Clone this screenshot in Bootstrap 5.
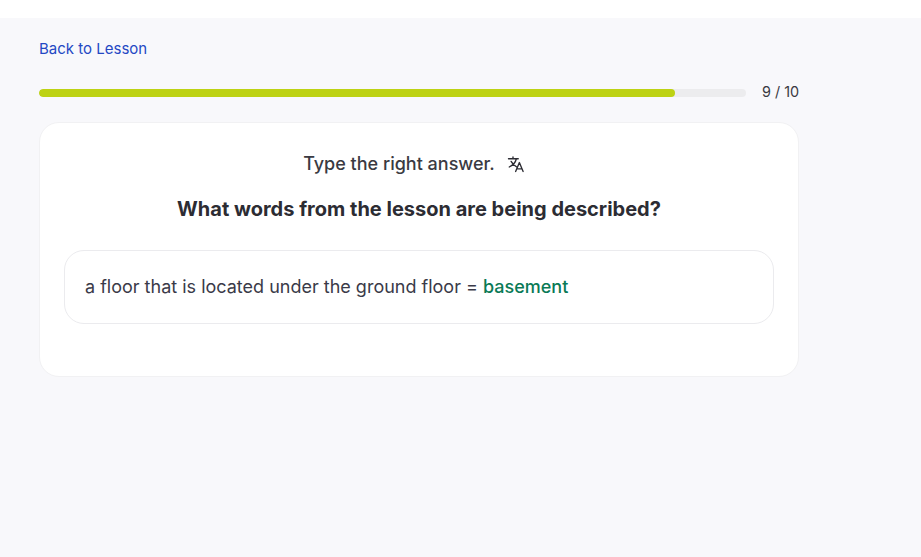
<!DOCTYPE html>
<html lang="en">
<head>
  <meta charset="UTF-8">
  <title>Exercise</title>
  <link href="https://cdn.jsdelivr.net/npm/bootstrap@5.3.0/dist/css/bootstrap.min.css" rel="stylesheet">
  <style>
    body {
      font-family: Inter, sans-serif;
      background-color: #fff;
      color: #2c2c33;
      overflow: hidden;
    }
    .page-wrap {
      margin-top: 18px;
      height: 539px;
      background-color: #f8f8fb;
      padding: 21px 122px 0 39px;
    }
    .back-link {
      font-size: 15px;
      line-height: 20px;
      color: #2448c4;
      text-decoration: none;
    }
    .progress-row {
      margin-top: 24px;
      height: 20px;
    }
    .lesson-progress {
      height: 8px;
      background-color: #ececee;
      border-radius: 4px;
    }
    .lesson-progress .progress-bar {
      background-color: #bdd213;
      border-radius: 4px;
    }
    .count-label {
      font-size: 14.4px;
      margin-left: 16px;
      margin-bottom: 2px;
      width: 37px;
      white-space: nowrap;
      color: #3a3a42;
    }
    .task-card {
      margin-top: 19px;
      height: 255px;
      background: #fff;
      border: 1px solid #f1f1f3;
      border-radius: 20px;
      padding: 28px 24px 0;
    }
    .task-hint {
      font-size: 18px;
      font-weight: 500;
      line-height: 26px;
      color: #3a3a42;
    }
    .hint-icon {
      margin-left: 4px;
      margin-right: 10px;
    }
    .task-title {
      font-size: 20px;
      font-weight: 700;
      line-height: 28px;
      margin: 18px 0 27px;
      color: #2c2c33;
    }
    .answer-box {
      height: 74px;
      border: 1px solid #ebebee;
      border-radius: 20px;
      padding: 0 20px 1px;
      font-size: 18px;
      color: #3a3a48;
    }
    .answer-word {
      color: #0a7a56;
      font-weight: 500;
    }
  </style>
</head>
<body>
  <div class="page-wrap">
    <a href="#" class="back-link d-block">Back to Lesson</a>
    <div class="progress-row d-flex align-items-center">
      <div class="progress lesson-progress flex-grow-1">
        <div class="progress-bar" style="width: 90%"></div>
      </div>
      <span class="count-label">9 / 10</span>
    </div>
    <div class="task-card">
      <div class="task-hint d-flex justify-content-center align-items-center gap-2">
        <span>Type the right answer.</span>
        <svg class="hint-icon" width="18" height="18" viewBox="0 0 24 24" fill="none" stroke="#2c2c33" stroke-width="1.8" stroke-linecap="round" stroke-linejoin="round"><path d="M2 5h13M8 2.500V5M12.500 5c-1 4.500-4.500 8.500-9.500 11M5.500 8.500c1.500 3 4 5.500 7.500 7.500"/><path d="M11.500 22l5-12 5 12M13.200 18.500h6.600"/></svg>
      </div>
      <h2 class="task-title text-center">What words from the lesson are being described?</h2>
      <div class="answer-box d-flex align-items-center">
        <span>a floor that is located under the ground floor = <span class="answer-word">basement</span></span>
      </div>
    </div>
  </div>
  <script src="https://cdn.jsdelivr.net/npm/bootstrap@5.3.0/dist/js/bootstrap.bundle.min.js"></script>
</body>
</html>
